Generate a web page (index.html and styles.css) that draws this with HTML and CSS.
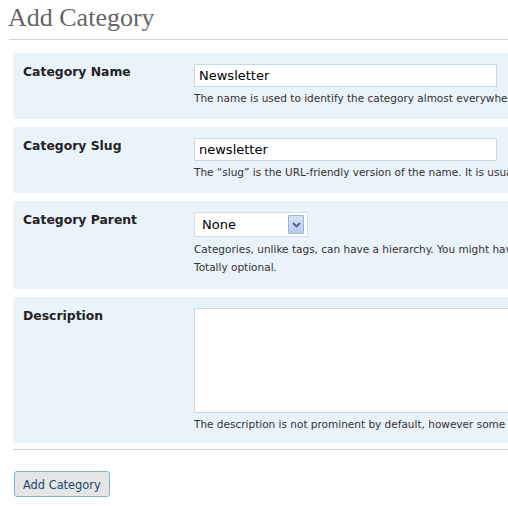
FILE: index.html
```html
<!DOCTYPE html>
<html>
<head>
<meta charset="utf-8">
<link rel="stylesheet" href="styles.css">
</head>
<body>
<div class="page">
  <h2 class="title">Add Category</h2>
  <div class="rule"></div>
  <form class="form">
    <div class="row row-name">
      <div class="label">Category Name</div>
      <div class="field">
        <div class="input">Newsletter</div>
        <p class="desc">The name is used to identify the category almost everywhere, for example under the post or in the category widget.</p>
      </div>
    </div>
    <div class="row row-slug">
      <div class="label">Category Slug</div>
      <div class="field">
        <div class="input">newsletter</div>
        <p class="desc">The “slug” is the URL-friendly version of the name. It is usually all lowercase and contains only letters, numbers, and hyphens.</p>
      </div>
    </div>
    <div class="row row-parent">
      <div class="label">Category Parent</div>
      <div class="field">
        <div class="select">
          <span class="select-value">None</span>
          <span class="select-arrow"><svg width="9" height="6" viewBox="0 0 9 6"><path d="M1 1 L4.5 4.5 L8 1" fill="none" stroke="#4d6185" stroke-width="1.8"/></svg></span>
        </div>
        <p class="desc">Categories, unlike tags, can have a hierarchy. You might have a Jazz category, and under that have children categories for Bebop and Big Band.<br>Totally optional.</p>
      </div>
    </div>
    <div class="row row-desc">
      <div class="label">Description</div>
      <div class="field">
        <div class="textarea"></div>
        <p class="desc">The description is not prominent by default, however some themes may show it.</p>
      </div>
    </div>
    <div class="rule rule-bottom"></div>
    <div class="actions">
      <button type="button" class="button">Add Category</button>
    </div>
  </form>
</div>
</body>
</html>
```

FILE: styles.css
```css
html, body {
  margin: 0;
  padding: 0;
  overflow: hidden;
  background: #fff;
}
.page {
  width: 508px;
  height: 506px;
  overflow: hidden;
  font-family: "DejaVu Sans", Verdana, sans-serif;
  color: #333;
}
.title {
  margin: 0;
  padding: 2px 0 0 8px;
  height: 31px;
  font-family: "Liberation Serif", "Times New Roman", serif;
  font-weight: normal;
  font-size: 26px;
  line-height: 32px;
  color: #666;
  white-space: nowrap;
}
.rule {
  margin: 6px 0 0 9px;
  width: 900px;
  height: 1px;
  background: #d4d4d4;
}
.form {
  margin: 13px 0 0 13px;
  width: 1100px;
}
.row {
  display: grid;
  grid-template-columns: 181px 1fr;
  background: #eaf2fa;
  padding: 11px 0 0 0;
  margin-bottom: 8px;
}
.row-name, .row-slug { height: 55px; }
.row-parent { height: 77px; }
.row-desc { height: 135px; margin-bottom: 0; }
.label {
  padding: 0 0 0 10px;
  font-weight: bold;
  font-size: 12.4px;
  line-height: 16px;
  color: #222;
  white-space: nowrap;
}
.field {
  display: flex;
  flex-direction: column;
  align-items: flex-start;
}
.input {
  box-sizing: border-box;
  width: 303px;
  height: 23px;
  border: 1px solid #c6d9e9;
  background: #fff;
  padding: 0 4px;
  font-size: 13px;
  line-height: 21px;
  color: #000;
}
.desc {
  margin: 2px 0 0 0;
  font-size: 10.5px;
  line-height: 18px;
  color: #333;
  white-space: nowrap;
}
.select {
  box-sizing: border-box;
  width: 114px;
  height: 25px;
  border: 1px solid #d6dde5;
  background: #fff;
  display: flex;
  align-items: center;
  justify-content: space-between;
  padding: 0 3px 0 7px;
  margin-bottom: 1px;
}
.select-value {
  font-size: 13px;
  color: #000;
}
.select-arrow {
  box-sizing: border-box;
  width: 16px;
  height: 19px;
  border: 1px solid #a3b4cf;
  border-radius: 1px;
  background: linear-gradient(#d6e2fb, #b8ccf2);
  display: flex;
  align-items: center;
  justify-content: center;
}
.textarea {
  box-sizing: border-box;
  width: 700px;
  height: 105px;
  border: 1px solid #c6d9e9;
  background: #fff;
}
.rule-bottom {
  margin: 6px 0 0 0;
  background: #cfcfcf;
}
.actions {
  padding: 21px 0 0 1px;
}
.button {
  box-sizing: border-box;
  height: 26px;
  padding: 1px 8px 0;
  border: 1px solid #80b5d0;
  border-radius: 3px;
  background: #e5e5e5;
  font-family: "DejaVu Sans", Verdana, sans-serif;
  font-size: 11.4px;
  color: #21456e;
  cursor: pointer;
}
```
